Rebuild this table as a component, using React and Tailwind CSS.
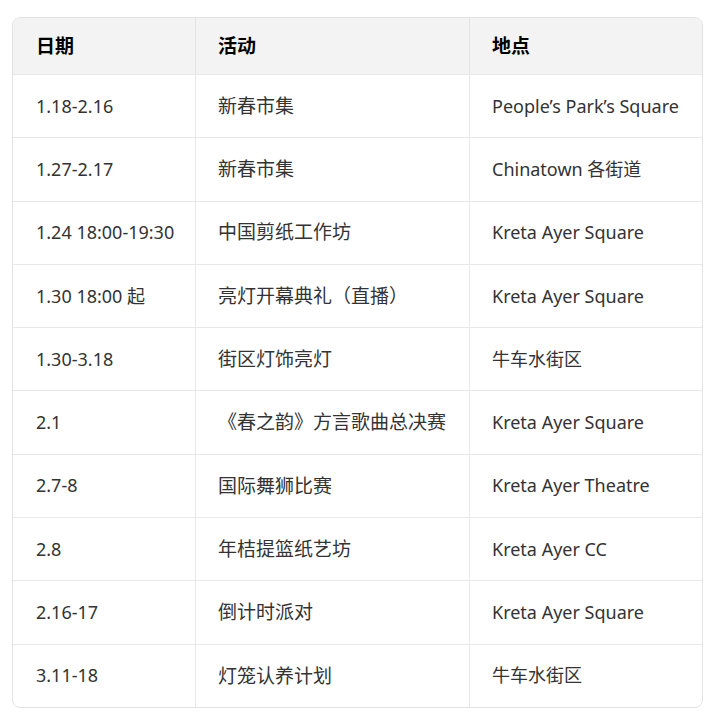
import React from "react";

const rows = [
  ["1.18-2.16", "新春市集", "People’s Park’s Square"],
  ["1.27-2.17", "新春市集", "Chinatown 各街道"],
  ["1.24 18:00-19:30", "中国剪纸工作坊", "Kreta Ayer Square"],
  ["1.30 18:00 起", "亮灯开幕典礼（直播）", "Kreta Ayer Square"],
  ["1.30-3.18", "街区灯饰亮灯", "牛车水街区"],
  ["2.1", "《春之韵》方言歌曲总决赛", "Kreta Ayer Square"],
  ["2.7-8", "国际舞狮比赛", "Kreta Ayer Theatre"],
  ["2.8", "年桔提篮纸艺坊", "Kreta Ayer CC"],
  ["2.16-17", "倒计时派对", "Kreta Ayer Square"],
  ["3.11-18", "灯笼认养计划", "牛车水街区"],
];

const font = {
  fontFamily: '"Noto Sans", "Noto Sans CJK SC", sans-serif',
};

export default function App() {
  return (
    <div className="bg-white w-[722px] h-[726px] pt-[17px] px-[12px]" style={font}>
      <div className="w-[691px] border border-[#e3e3e3] rounded-lg overflow-hidden">
        <div className="grid grid-cols-[183px_274px_1fr] h-[56px] bg-[#f3f3f3] text-[19px] font-bold text-black">
          <div className="flex items-center pl-[23px] border-r border-[#e3e3e3]">日期</div>
          <div className="flex items-center pl-[22px] border-r border-[#e3e3e3]">活动</div>
          <div className="flex items-center pl-[22px]">地点</div>
        </div>
        {rows.map((r, idx) => (
          <div
            key={idx}
            className="grid grid-cols-[183px_274px_1fr] h-[63.3px] border-t border-[#e8e8e8] text-[18px] text-[#333]"
          >
            <div className="flex items-center pl-[23px] border-r border-[#e8e8e8]">{r[0]}</div>
            <div className="flex items-center pl-[22px] border-r border-[#e8e8e8] text-[19px]">{r[1]}</div>
            <div className="flex items-center pl-[22px]">{r[2]}</div>
          </div>
        ))}
      </div>
    </div>
  );
}
